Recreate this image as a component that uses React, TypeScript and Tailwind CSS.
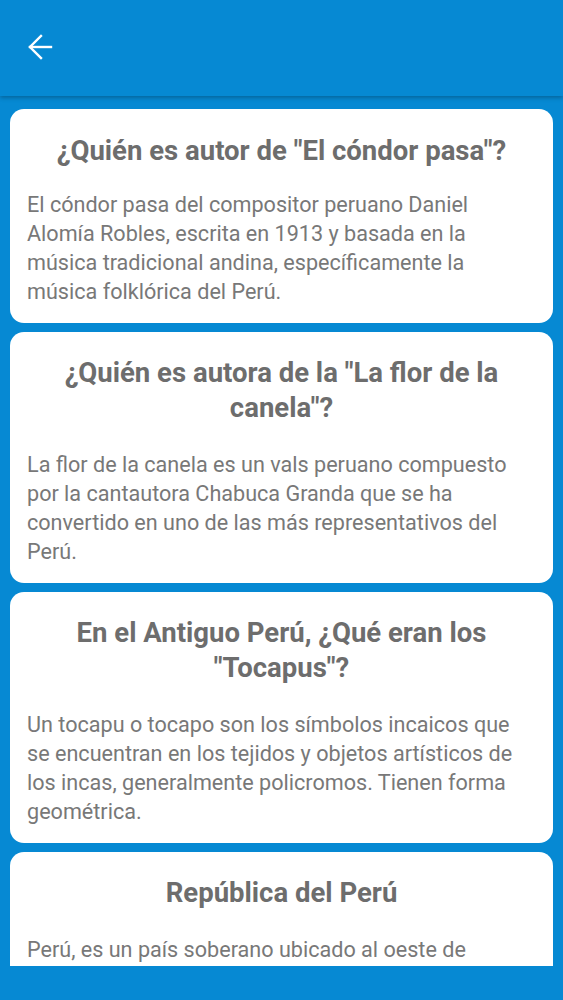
import React from 'react';

const cards = [
  {
    title: '¿Quién es autor de "El cóndor pasa"?',
    body: 'El cóndor pasa del compositor peruano Daniel Alomía Robles, escrita en 1913 y basada en la música tradicional andina, específicamente la música folklórica del Perú.',
    first: true,
  },
  {
    title: '¿Quién es autora de la "La flor de la canela"?',
    body: 'La flor de la canela es un vals peruano compuesto por la cantautora Chabuca Granda que se ha convertido en uno de las más representativos del Perú.',
  },
  {
    title: 'En el Antiguo Perú, ¿Qué eran los "Tocapus"?',
    body: 'Un tocapu o tocapo son los símbolos incaicos que se encuentran en los tejidos y objetos artísticos de los incas, generalmente policromos. Tienen forma geométrica.',
  },
  {
    title: 'República del Perú',
    body: 'Perú, es un país soberano ubicado al oeste de América del Sur. El océano Pacífico baña sus costas y limita con Ecuador, Colombia, Brasil, Bolivia y Chile.',
  },
];

function BackArrow() {
  return (
    <svg width="26" height="28" viewBox="0 0 26 28" fill="none" stroke="white" strokeWidth="2.4" strokeLinecap="square">
      <path d="M3 14H24" />
      <path d="M14 3L3 14L14 25" />
    </svg>
  );
}

export default function App() {
  return (
    <div
      className="h-[1000px] w-full flex flex-col bg-[#0689d3] overflow-hidden"
      style={{ fontFamily: 'Roboto, "Noto Sans", sans-serif' }}
    >
      {/* Toolbar */}
      <header className="relative z-10 h-[96px] shrink-0 flex items-center pl-[27px] pb-[3px] bg-[#0689d3] shadow-[0_2px_4px_rgba(0,0,0,0.25)]">
        <BackArrow />
      </header>

      {/* List */}
      <main className="h-[870px] shrink-0 overflow-hidden px-[10px] pt-[13px] flex flex-col gap-[9px]">
        {cards.map((c) => (
          <div
            key={c.title}
            className={`shrink-0 bg-white rounded-[14px] px-[17px] pb-[17px] ${c.first ? 'pt-[24px]' : 'pt-[23px]'}`}
          >
            <h2 className="text-center text-[#6d6d6d] text-[27.5px] leading-[35px] font-bold px-[10px]">{c.title}</h2>
            <p className={`text-[#787878] text-[21.6px] leading-[29px] ${c.first ? 'mt-[22px]' : 'mt-[25px]'}`}>{c.body}</p>
          </div>
        ))}
      </main>
    </div>
  );
}
